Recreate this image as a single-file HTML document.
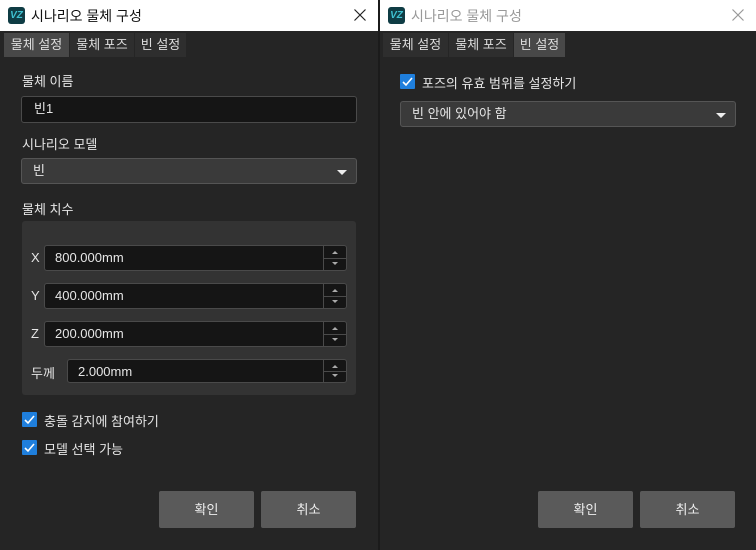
<!DOCTYPE html>
<html><head><meta charset="utf-8"><style>
*{box-sizing:border-box;margin:0;padding:0}
body{width:756px;height:550px;background:#1b1b1b;font-family:"Liberation Sans","Noto Sans CJK KR",sans-serif;font-size:13px;color:#e6e6e6;position:relative;overflow:hidden}
.win{position:absolute;top:0;height:550px;background:#252525}
.title{position:absolute;left:0;top:0;right:0;height:31px;background:#fff;color:#111;font-size:14px}
.title .ic{position:absolute;left:8px;top:7px;width:17px;height:17px;background:#0f3c44;border-radius:3px;color:#3fc0d0;font-size:10px;font-weight:bold;line-height:17px;text-align:center;font-style:italic}
.title .t{position:absolute;left:31px;top:6px}
.title svg.x{position:absolute;right:12px;top:9px}
.tab{position:absolute;top:33px;height:24px;background:#2e2e2e;color:#ddd;text-align:center;line-height:23px}
.tab.on{background:#484848}
.lbl{position:absolute;color:#e6e6e6}
.inp{position:absolute;background:#151515;border:1px solid #4a4a4a;border-radius:3px;padding-left:12px;line-height:24px}
.cmb{position:absolute;background:#3a3a3a;border:1px solid #555;border-radius:3px;padding-left:11px;line-height:24px}
.cmb:after{content:"";position:absolute;right:9px;top:11px;border-left:5px solid transparent;border-right:5px solid transparent;border-top:5px solid #eee}
.grp{position:absolute;background:#333;border-radius:3px}
.spin{position:absolute;background:#151515;border:1px solid #4a4a4a;border-radius:3px;padding-left:10px;line-height:23px}
.spin .b{position:absolute;right:0;top:0;bottom:0;width:23px;border-left:1px solid #4a4a4a}
.spin .b:before{content:"";position:absolute;left:8px;top:5px;border-left:3px solid transparent;border-right:3px solid transparent;border-bottom:3px solid #aaa}
.spin .b:after{content:"";position:absolute;left:8px;bottom:5px;border-left:3px solid transparent;border-right:3px solid transparent;border-top:3px solid #aaa}
.spin .m{position:absolute;right:0;width:23px;top:50%;border-top:1px solid #4a4a4a}
.cb{position:absolute;width:15px;height:15px;background:#1f7fdd;border-radius:1px}
.cb svg{position:absolute;left:2px;top:2px}
.btn{position:absolute;top:491px;width:95px;height:37px;background:#5a5a5a;border-radius:2px;text-align:center;line-height:37px;color:#eee}
</style></head><body>
<div class="win" style="left:0;width:378px">
 <div class="title"><div class="ic">VZ</div><div class="t">시나리오 물체 구성</div><svg class="x" width="12" height="12"><path d="M0.5 0.5 L11.5 11.5 M11.5 0.5 L0.5 11.5" stroke="#222" stroke-width="1.2"/></svg></div>
 <div class="tab on" style="left:4px;width:65px">물체 설정</div>
 <div class="tab" style="left:70px;width:64px">물체 포즈</div>
 <div class="tab" style="left:135px;width:51px">빈 설정</div>
 <div class="lbl" style="left:22px;top:71px">물체 이름</div>
 <div class="inp" style="left:21px;top:96px;width:336px;height:27px">빈1</div>
 <div class="lbl" style="left:22px;top:134px">시나리오 모델</div>
 <div class="cmb" style="left:21px;top:158px;width:336px;height:26px">빈</div>
 <div class="lbl" style="left:22px;top:199px">물체 치수</div>
 <div class="grp" style="left:22px;top:221px;width:334px;height:174px"></div>
 <div class="lbl" style="left:31px;top:250px">X</div>
 <div class="spin" style="left:44px;top:245px;width:303px;height:26px">800.000mm<div class="b"></div><div class="m"></div></div>
 <div class="lbl" style="left:31px;top:288px">Y</div>
 <div class="spin" style="left:44px;top:283px;width:303px;height:26px">400.000mm<div class="b"></div><div class="m"></div></div>
 <div class="lbl" style="left:31px;top:326px">Z</div>
 <div class="spin" style="left:44px;top:321px;width:303px;height:26px">200.000mm<div class="b"></div><div class="m"></div></div>
 <div class="lbl" style="left:31px;top:363px">두께</div>
 <div class="spin" style="left:67px;top:359px;width:280px;height:24px">2.000mm<div class="b"></div><div class="m"></div></div>
 <div class="cb" style="left:22px;top:412px"><svg width="11" height="11"><path d="M1 6 L4 9 L10 2" stroke="#fff" stroke-width="1.6" fill="none"/></svg></div>
 <div class="lbl" style="left:44px;top:411px">충돌 감지에 참여하기</div>
 <div class="cb" style="left:22px;top:440px"><svg width="11" height="11"><path d="M1 6 L4 9 L10 2" stroke="#fff" stroke-width="1.6" fill="none"/></svg></div>
 <div class="lbl" style="left:44px;top:439px">모델 선택 가능</div>
 <div class="btn" style="left:159px">확인</div>
 <div class="btn" style="left:261px">취소</div>
</div>
<div class="win" style="left:380px;width:376px">
 <div class="title" style="color:#999"><div class="ic">VZ</div><div class="t">시나리오 물체 구성</div><svg class="x" width="12" height="12"><path d="M0.5 0.5 L11.5 11.5 M11.5 0.5 L0.5 11.5" stroke="#999" stroke-width="1.2"/></svg></div>
 <div class="tab" style="left:3px;width:65px">물체 설정</div>
 <div class="tab" style="left:69px;width:64px">물체 포즈</div>
 <div class="tab on" style="left:134px;width:51px">빈 설정</div>
 <div class="cb" style="left:20px;top:74px"><svg width="11" height="11"><path d="M1 6 L4 9 L10 2" stroke="#fff" stroke-width="1.6" fill="none"/></svg></div>
 <div class="lbl" style="left:42px;top:73px">포즈의 유효 범위를 설정하기</div>
 <div class="cmb" style="left:20px;top:101px;width:336px;height:26px">빈 안에 있어야 함</div>
 <div class="btn" style="left:158px">확인</div>
 <div class="btn" style="left:260px">취소</div>
</div>
</body></html>
